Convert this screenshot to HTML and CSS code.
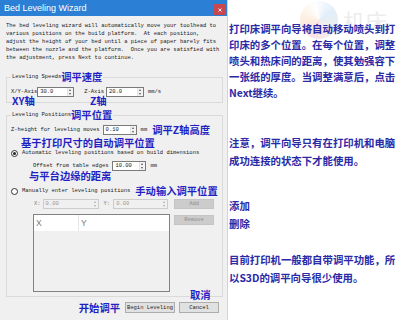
FILE: index.html
```html
<!DOCTYPE html>
<html>
<head>
<meta charset="utf-8">
<link rel="stylesheet" href="styles.css">
</head>
<body>
<div class="page">
  <div class="dialog">
    <div class="titlebar">
      <span class="title">Bed Leveling Wizard</span>
      <span class="close"><svg width="4" height="4" viewBox="0 0 4 4"><path d="M0.5 0.5L3.5 3.5M3.5 0.5L0.5 3.5" stroke="#fff" stroke-width="0.9"/></svg></span>
    </div>
    <div class="intro">The bed leveling wizard will automatically move your toolhead to
various positions on the build platform.  At each position,
adjust the height of your bed until a piece of paper barely fits
between the nozzle and the platform.  Once you are satisfied with
the adjustment, press Next to continue.</div>

    <fieldset class="group g1">
      <legend><span class="lg">Leveling Speeds</span><span class="note">调平速度</span></legend>
      <div class="row r-speed">
        <span class="lbl">X/Y-Axis</span>
        <div class="spin w37"><span class="val">30.0</span><span class="arr"></span></div>
        <span class="lbl ml10">Z-Axis</span>
        <div class="spin w38 ml2"><span class="val">20.0</span><span class="arr"></span></div>
        <span class="lbl ml4">mm/s</span>
      </div>
    </fieldset>

    <fieldset class="group g2">
      <legend><span class="lg">Leveling Positions</span><span class="note">调平位置</span></legend>
      <div class="row r-z">
        <span class="lbl">Z-height for leveling moves</span>
        <div class="spin w34 ml3"><span class="val">0.10</span><span class="arr"></span></div>
        <span class="lbl ml4">mm</span>
        <span class="note ml5">调平Z轴高度</span>
      </div>
      <div class="noterow n-auto"><span class="note">基于打印尺寸的自动调平位置</span></div>
      <div class="row r-radio">
        <span class="radio checked"></span>
        <span class="lbl">Automatic leveling positions based on build dimensions</span>
      </div>
      <div class="row r-offset">
        <span class="lbl">Offset from table edges</span>
        <div class="spin w34 ml4"><span class="val">10.00</span><span class="arr"></span></div>
        <span class="lbl ml4">mm</span>
      </div>
      <div class="noterow n-offset"><span class="note">与平台边缘的距离</span></div>
      <div class="row r-radio2">
        <span class="radio"></span>
        <span class="lbl">Manually enter leveling positions</span>
        <span class="note ml5">手动输入调平位置</span>
      </div>
      <div class="row r-xy">
        <span class="lbl dis">X:</span>
        <div class="spin disabled w56 ml2"><span class="val">0.00</span><span class="arr"></span></div>
        <span class="lbl dis ml5">Y:</span>
        <div class="spin disabled w55 ml3"><span class="val">0.00</span><span class="arr"></span></div>
        <span class="btn disabled w40 ml6">Add</span>
      </div>
      <div class="r-table">
        <div class="table">
          <div class="thead"><span class="th c1">X</span><span class="th c2">Y</span></div>
        </div>
        <span class="btn disabled w40 ml4 remove">Remove</span>
      </div>
    </fieldset>

    <div class="actions">
      <span class="note mr5">开始调平</span>
      <span class="btn w50">Begin Leveling</span>
      <span class="btn w40 ml4">Cancel</span>
    </div>

    <span class="note abs a-xy">XY轴</span>
    <span class="note abs a-z">Z轴</span>
    <span class="note abs a-cancel">取消</span>
  </div>

  <div class="side">
    <div class="watermark">
      <span class="wm-logo"></span>
      <span class="wm-text">机床</span>
    </div>
    <p class="p1">打印床调平向导将自动移动喷头到打<br>印床的多个位置。在每个位置，调整<br>喷头和热床间的距离，使其勉强容下<br>一张纸的厚度。当调整满意后，点击<br>Next继续。</p>
    <p class="p2">注意，调平向导只有在打印机和电脑<br>成功连接的状态下才能使用。</p>
    <p class="p3">添加<br>删除</p>
    <p class="p4">目前打印机一般都自带调平功能，所<br>以S3D的调平向导很少使用。</p>
  </div>
</div>
</body>
</html>
```

FILE: styles.css
```css
* { box-sizing: border-box; }
html, body { margin: 0; padding: 0; }
body { width: 400px; height: 320px; overflow: hidden; background: #fff; }

.page { display: flex; height: 320px; }

.dialog {
  width: 228px;
  height: 320px;
  flex: none;
  position: relative;
  background: #f0f0f0;
  border-right: 1px solid #d4d4d4;
  display: flex;
  flex-direction: column;
  font-family: "Liberation Mono", "DejaVu Sans Mono", monospace;
  font-size: 5.47px;
  color: #1a1a1a;
}

.titlebar {
  height: 16px;
  flex: none;
  background: #2b7fd4;
  display: flex;
  justify-content: space-between;
  align-items: center;
  padding: 0 1px 0 4px;
}
.title {
  font-family: "Liberation Sans", Arial, sans-serif;
  font-size: 9px;
  color: #fff;
  line-height: 16px;
}
.close {
  width: 12px;
  height: 11px;
  margin-top: 3px;
  background: #c9464e;
  display: flex;
  align-items: center;
  justify-content: center;
}
.close svg { display: block; }

.intro {
  margin: 6px 0 0 6px;
  white-space: pre;
  line-height: 8px;
}

.group {
  margin: 9px 4px 0 6px;
  border: 1px solid #dadada;
  padding: 0 4px 5px 4px;
  min-width: 0;
}
.g2 { margin-top: 6px; padding-bottom: 4px; }

legend {
  padding: 0 1px;
  height: 12px;
  line-height: 12px;
  white-space: nowrap;
}
.lg { vertical-align: middle; line-height: 12px; }

.note {
  font-family: "Noto Sans CJK SC", "Noto Sans", sans-serif;
  font-weight: 700;
  font-size: 10.3px;
  line-height: 12px;
  color: #1f1fc4;
  white-space: nowrap;
  vertical-align: middle;
}

.row { display: flex; align-items: center; height: 10px; white-space: nowrap; }
.r-speed { margin-top: 4px; }
.r-z { margin-top: 4px; }
.noterow { height: 12px; display: flex; align-items: center; }
.n-auto { margin-top: 2px; padding-left: 10px; }
.r-radio { height: 8px; }
.r-offset { margin-top: 4px; padding-left: 22px; }
.n-offset { height: 10px; padding-left: 18px; }
.r-radio2 { margin-top: 6px; height: 8px; }
.r-xy { margin-top: 4px; padding-left: 23px; }
.r-table { margin-top: 5px; padding-left: 22px; display: flex; align-items: flex-start; }

.lbl { line-height: 8px; }
.dis { color: #7a7a7a; }

.ml2 { margin-left: 2px; }
.ml3 { margin-left: 3px; }
.ml4 { margin-left: 4px; }
.ml5 { margin-left: 5px; }
.ml6 { margin-left: 6px; }
.ml10 { margin-left: 10px; }
.mr5 { margin-right: 5px; }

.spin {
  height: 10px;
  background: #fff;
  border: 1px solid #7a7a7a;
  display: flex;
  justify-content: space-between;
  align-items: stretch;
  flex: none;
}
.spin .val { padding-left: 2px; line-height: 8px; }
.spin .arr {
  width: 6px;
  background: #f3f3f3;
  border-left: 1px solid #e2e2e2;
  position: relative;
}
.spin .arr::before,
.spin .arr::after {
  content: "";
  position: absolute;
  left: 1px;
  border-left: 1.5px solid transparent;
  border-right: 1.5px solid transparent;
}
.spin .arr::before { top: 1px; border-bottom: 2px solid #555; }
.spin .arr::after { bottom: 1px; border-top: 2px solid #555; }
.spin.disabled { background: #f0f0f0; border-color: #cccccc; color: #9a9a9a; }
.spin.disabled .arr { background: #f0f0f0; border-left-color: #f0f0f0; }
.spin.disabled .arr::before { border-bottom-color: #aaa; }
.spin.disabled .arr::after { border-top-color: #aaa; }

.w34 { width: 34px; }
.w37 { width: 37px; }
.w38 { width: 38px; }
.w40 { width: 40px; }
.w50 { width: 50px; }
.w55 { width: 55px; }
.w56 { width: 56px; }

.radio {
  width: 7px;
  height: 7px;
  border-radius: 50%;
  border: 1px solid #333;
  background: #fff;
  margin-right: 4px;
  flex: none;
  display: flex;
  align-items: center;
  justify-content: center;
}
.radio.checked::after {
  content: "";
  width: 3px;
  height: 3px;
  border-radius: 50%;
  background: #222;
}

.btn {
  height: 11px;
  background: #e1e1e1;
  border: 1px solid #adadad;
  display: flex;
  align-items: center;
  justify-content: center;
  line-height: 8px;
  color: #222;
  flex: none;
}
.btn.disabled { height: 10px; background: #cccccc; border-color: #c4c4c4; color: #8c8c8c; }
.remove { margin-top: 1px; }

.table {
  width: 137px;
  height: 78px;
  border: 1px solid #828282;
  background: #f0f0f0;
  flex: none;
}
.thead { display: flex; height: 16px; background: #fff; }
.th {
  font-family: "Liberation Sans", Arial, sans-serif;
  font-size: 8.5px;
  color: #7a7a7a;
  line-height: 16px;
  padding-left: 2px;
}
.c1 { width: 45px; border-right: 1px solid #e6e6e6; }
.c2 { flex: 1; }

.actions {
  margin-top: 5px;
  height: 11px;
  padding-right: 8px;
  display: flex;
  justify-content: flex-end;
  align-items: center;
}

.abs { position: absolute; }
.a-xy { left: 12px; top: 96px; line-height: 10px; }
.a-z { left: 90px; top: 96px; line-height: 10px; }
.a-cancel { left: 190px; top: 289px; line-height: 11px; }

.side {
  flex: 1;
  position: relative;
  background: #fff;
  padding-left: 1px;
  font-family: "Noto Sans CJK SC", "Noto Sans", sans-serif;
  font-weight: 700;
  font-size: 10.4px;
  color: #2a2aa6;
  white-space: nowrap;
}
.side p { margin: 0; position: relative; }
.p1 { margin-top: 21px !important; line-height: 16px; }
.p2 { margin-top: 33px !important; line-height: 18px; }
.p3 { margin-top: 27px !important; line-height: 18px; }
.p4 { margin-top: 18px !important; line-height: 18px; }

.watermark {
  position: absolute;
  left: 72px;
  top: 1px;
  display: flex;
  align-items: center;
  opacity: 0.3;
}
.wm-logo {
  width: 38px;
  height: 38px;
  border-radius: 50%;
  background: conic-gradient(from 200deg, #f4a0a8, #f6c89a, #fff 40%, #9cc8ec 60%, #c8c8c8 80%, #f4a0a8);
}
.wm-text {
  margin-left: 5px;
  font-size: 22px;
  line-height: 24px;
  font-weight: 400;
  color: #c4c4c4;
}
```
